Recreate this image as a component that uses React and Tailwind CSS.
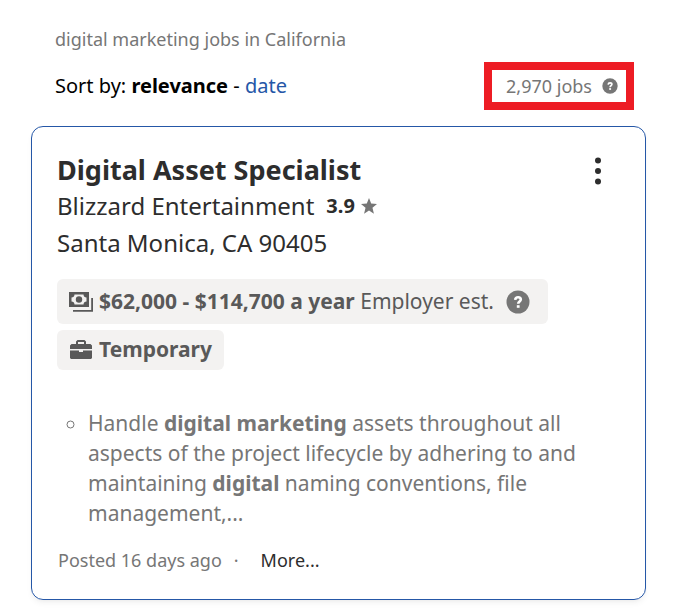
function HelpIcon({ className }) {
  return (
    <svg className={className} viewBox="0 0 24 24" aria-hidden="true">
      <circle cx="12" cy="12" r="11.500" fill="currentColor" />
      <path
        d="M9.200 9.800c.2-1.700 1.400-2.500 2.900-2.500 1.600 0 2.700.8 2.700 2.200 0 2-2.600 1.900-2.600 4.300"
        fill="none"
        stroke="#fff"
        strokeWidth="2.600"
      />
      <rect x="10.800" y="15.200" width="2.800" height="2.600" fill="#fff" />
    </svg>
  )
}

function StarIcon() {
  return (
    <svg className="size-4" viewBox="0 0 24 24" fill="currentColor" aria-hidden="true">
      <path d="M12 0l3.300 8.300 8.700.6-6.800 5.700L19.400 23.500 12 18.800 4.600 23.500l2.200-8.900L0 8.900l8.700-.6z" />
    </svg>
  )
}

function MoneyIcon() {
  return (
    <svg className="w-6 h-5 shrink-0" viewBox="0 0 24 20" fill="currentColor" aria-hidden="true">
      <path
        fillRule="evenodd"
        d="M0 0h20v15H0zM5.500 2.500c0 1.700-1.300 3-3 3v4c1.700 0 3 1.300 3 3h9c0-1.700 1.300-3 3-3v-4c-1.700 0-3-1.300-3-3z"
      />
      <circle cx="10" cy="7.500" r="3.200" />
      <path d="M22.200 6H24v13.800H4V18h18.200z" />
    </svg>
  )
}

function BriefcaseIcon() {
  return (
    <svg className="w-6 h-5 shrink-0" viewBox="0 0 24 20" fill="currentColor" aria-hidden="true">
      <path
        fillRule="evenodd"
        d="M7 4V1.500L8.500 0h7L17 1.500V4h4.500L23 5.500V9H1V5.500L2.500 4zm2 0h6V2H9z"
      />
      <path d="M1 10.500h9v1.500h4v-1.500h9V18l-1 1H2l-1-1z" />
    </svg>
  )
}

function MoreIcon() {
  return (
    <svg className="w-2 h-7" viewBox="0 0 8 28" fill="currentColor" aria-hidden="true">
      <circle cx="4" cy="3.500" r="3" />
      <circle cx="4" cy="14" r="3" />
      <circle cx="4" cy="24.500" r="3" />
    </svg>
  )
}

export default function App() {
  return (
    <main className="min-h-screen bg-white pt-[27px] pl-[31px] pr-[29px] font-['Noto_Sans',sans-serif] text-[#2d2d2d]">
      <header className="pl-6 pr-3">
        <p className="text-lg leading-6 text-[#767676]">digital marketing jobs in California</p>
        <div className="mt-[11px] flex items-center justify-between">
          <p className="text-xl text-black">
            Sort by: <b>relevance</b> -{' '}
            <a href="#date" className="text-[#2557a7]">
              date
            </a>
          </p>
          <div className="flex h-12 items-center gap-2.5 border-8 border-[#ed1c24] pl-3.5 pr-2">
            <span className="text-lg text-[#767676]">2,970 jobs</span>
            <button type="button" aria-label="About the job count" className="text-[#767676]">
              <HelpIcon className="size-4" />
            </button>
          </div>
        </div>
      </header>

      <article className="mt-4 rounded-xl border border-[#2557a7] px-[25px] pt-6 pb-[27px] shadow-md shadow-black/5">
        <div className="flex items-start justify-between">
          <div>
            <h2 className="text-[27px] leading-[37px] font-bold">Digital Asset Specialist</h2>
            <p className="flex items-center text-2xl leading-9">
              Blizzard Entertainment
              <b className="ml-3 mr-1.5 text-xl">3.9</b>
              <span className="text-[#767676]">
                <StarIcon />
              </span>
            </p>
            <p className="text-2xl leading-[37px]">Santa Monica, CA 90405</p>
          </div>
          <button type="button" aria-label="Job actions" className="mt-1.5 mr-[18px]">
            <MoreIcon />
          </button>
        </div>

        <div className="mt-[18px] flex flex-col items-start gap-1.5 text-[21px] text-[#595959]">
          <div className="flex h-[45px] items-center gap-1.5 rounded-md bg-[#f3f2f1] pl-3 pr-[18px]">
            <MoneyIcon />
            <p>
              <b>$62,000 - $114,700 a year</b> Employer est.
            </p>
            <button
              type="button"
              aria-label="About this estimate"
              className="ml-1.5 text-[#767676]"
            >
              <HelpIcon className="size-6" />
            </button>
          </div>
          <div className="flex h-10 items-center gap-1.5 rounded-md bg-[#f3f2f1] px-3">
            <BriefcaseIcon />
            <b>Temporary</b>
          </div>
        </div>

        <ul className="mt-[38px] list-[circle] pl-[31px] text-[21px] leading-[30px] text-[#767676]">
          <li>
            Handle <b>digital marketing</b> assets throughout all aspects of the project lifecycle by
            adhering to and maintaining <b>digital</b> naming conventions, file management,...
          </li>
        </ul>

        <footer className="mt-5 flex items-center pl-px text-lg leading-6 text-[#767676]">
          <span>Posted 16 days ago</span>
          <span className="mx-3">·</span>
          <button type="button" className="ml-2.5 text-[#2d2d2d]">
            More...
          </button>
        </footer>
      </article>
    </main>
  )
}
